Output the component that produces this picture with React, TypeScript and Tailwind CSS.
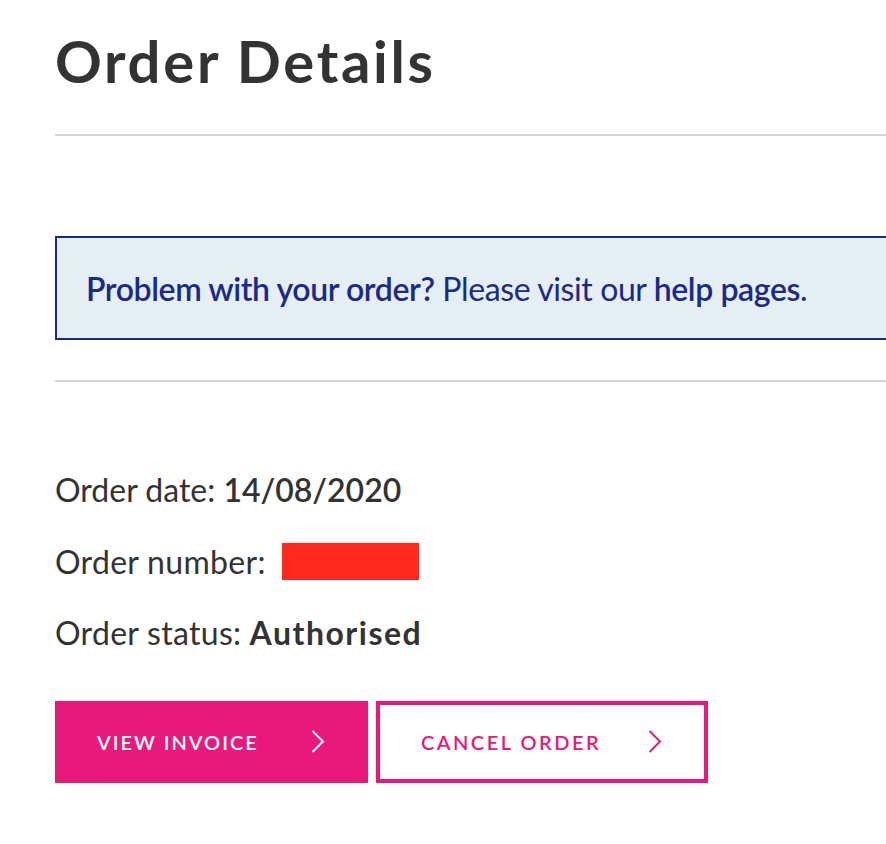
import React from "react";

function Chevron({ color }: { color: string }) {
  return (
    <svg width="14" height="23" viewBox="0 0 14 23" fill="none" className="shrink-0">
      <polyline points="1.5,1 12,11.5 1.5,22" stroke={color} strokeWidth="2" fill="none" />
    </svg>
  );
}

export default function App() {
  return (
    <div
      className="min-h-[844px] w-full overflow-hidden bg-white text-[#333333]"
      style={{ fontFamily: "Lato, 'Noto Sans', sans-serif" }}
    >
      <div className="pl-[55px]">
        <h1 className="pt-[32px] text-[58px] font-bold leading-[58px] tracking-[2.7px] text-[#333333]">
          Order Details
        </h1>
        <div className="mt-[44px] h-[2px] bg-[#d3d7da]" />

        <div className="mt-[100px] border-2 border-r-0 border-[#1b2a8a] bg-[#e5eef2] pl-[29px] pt-[32px] pb-[30px] text-[32px] leading-[38px] tracking-[-0.4px] text-[#1b2a8a]">
          <span className="font-semibold">Problem with your order?</span> Please visit our{" "}
          <span className="font-semibold">help pages</span>.
        </div>

        <div className="mt-[40px] h-[2px] bg-[#d3d7da]" />

        <div className="mt-[72px] flex flex-col text-[32px] leading-[71.5px]">
          <div>
            Order date: <span className="font-semibold">14/08/2020</span>
          </div>
          <div className="flex items-center">
            <span className="tracking-[0.3px]">Order number:</span>
            <span className="ml-[16px] inline-block h-[37px] w-[137px] bg-[#ff2a1f]" />
          </div>
          <div>
            <span className="tracking-[0.3px]">Order status:</span>{" "}
            <span className="font-bold tracking-[1.5px]">Authorised</span>
          </div>
        </div>

        <div className="mt-[32px] flex gap-[8px]">
          <button className="flex h-[82px] w-[313px] items-center justify-between bg-[#e9187b] pl-[42px] pr-[43px] text-[20px] font-semibold uppercase tracking-[2px] text-white">
            <span>View Invoice</span>
            <Chevron color="#ffffff" />
          </button>
          <button className="flex h-[82px] w-[332px] items-center justify-between border-4 border-[#e9187b] bg-white pl-[41px] pr-[42px] text-[20px] font-semibold uppercase tracking-[2.5px] text-[#e9187b]">
            <span>Cancel Order</span>
            <Chevron color="#e9187b" />
          </button>
        </div>
      </div>
    </div>
  );
}
